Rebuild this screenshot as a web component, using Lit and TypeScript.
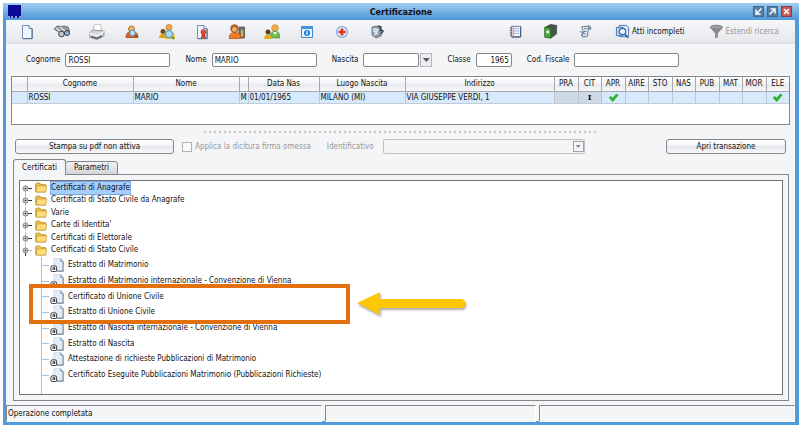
import { LitElement, html, css, svg, nothing } from "lit";
import { customElement } from "lit/decorators.js";
import { classMap } from "lit/directives/class-map.js";

const page = svg`<path d="M3.500 1.500h6.500l3 3v10h-9.500z" fill="#eef4fc" stroke="#7d8fb0"/><path d="M10 1.500v3h3" fill="#fff" stroke="#6b82a8"/><path d="M13.200 5v9.700H4" fill="none" stroke="#56698f"/>`;

const icons = {
  page,
  binoculars: svg`<path d="M0 5l3-3 4 .5 3-.5 4 1 2 5-3 3-5-1z" fill="#9a9ea1" stroke="#5b5f62" stroke-width=".8"/><path d="M2 4l5 4M6 3l5 4" stroke="#e6e8ea" stroke-width="1.200"/><circle cx="7.500" cy="10" r="2.800" fill="#c3c8cc" stroke="#3c4043"/><circle cx="13" cy="9" r="2.500" fill="#8cbbe4" stroke="#3c4043"/>`,
  printer: svg`<path d="M4 7l1-6 6-1 2 6z" fill="#fff" stroke="#a5a9ac" stroke-width=".7"/><path d="M0 9l4-3 11 1v5l-7 3.500L0 13z" fill="#d5d8da" stroke="#85898c" stroke-width=".8"/><path d="M0 9l8 2.500 7-4" fill="none" stroke="#fff"/><path d="M2 12.500l6 2 5-2.500" fill="none" stroke="#5e6366" stroke-width="1.400"/>`,
  userSearch: svg`<path d="M2 13.500c0-5 3-6 6-6s6 1 6 6z" fill="#d9622b" stroke="#9b3c14" stroke-width=".7"/><circle cx="7.500" cy="5" r="3" fill="#efb35b" stroke="#a85c1e" stroke-width=".8"/><circle cx="8.500" cy="9" r="2.800" fill="#b9e2fb" stroke="#4b91c8"/><path d="M11 11.500l2.500 2" stroke="#8a5a20" stroke-width="2"/>`,
  family: svg`<circle cx="10" cy="3.500" r="3" fill="#f0a63c" stroke="#b66a16" stroke-width=".6"/><path d="M6 15c0-6 2-8 5-8s5 2 5 8z" fill="#f2bc35"/><circle cx="4" cy="7.500" r="2.500" fill="#6b4a17"/><path d="M0 14c0-3 2-4.500 4-4.500s4 1.500 4 4.500z" fill="#dca415"/><circle cx="10" cy="10" r="3.500" fill="#a9dafa" stroke="#4b91c8"/><path d="M13 13l2 2" stroke="#48a338" stroke-width="2"/>`,
  pageRibbon: svg`${page}<circle cx="9.500" cy="8" r="2.600" fill="#e2503c" stroke="#b12d20" stroke-width=".6"/><path d="M8 10l-1.500 5 2.500-1.500L12 15l-1-5z" fill="#cf3527"/>`,
  userCard: svg`<path d="M10 3h5.500v11H10z" fill="#6b7378" stroke="#43494d" stroke-width=".7"/><path d="M12 5l2 2v5l-2 1z" fill="#e4b43a"/><path d="M0 14.500c0-5 3-6 6-6s6 1 6 6z" fill="#ee7c20" stroke="#a84b10" stroke-width=".7"/><circle cx="5.500" cy="4.500" r="3.800" fill="#c46a26" stroke="#8a4313" stroke-width=".7"/><circle cx="5.500" cy="5.500" r="2.300" fill="#f2b878"/>`,
  couple: svg`<circle cx="11" cy="4" r="3.300" fill="#f2b04a" stroke="#b2741e" stroke-width=".6"/><path d="M6 14c0-5 2-6.500 5-6.500s5 1.500 5 6.500z" fill="#6dbd4d" stroke="#3c8a28" stroke-width=".6"/><circle cx="4" cy="8" r="2.500" fill="#5e3f14"/><path d="M0 15c0-3 2-4.500 4-4.500s4 1.500 4 4.500z" fill="#e0aa1d"/><path d="M9 8l2 3 2-3" fill="#fff"/>`,
  infoBox: svg`<path d="M2.500 2.500h11v11h-11z" fill="#e9f5fe" stroke="#3a8bd0"/><path d="M2 2h12v3H2z" fill="#3f97df"/><circle cx="8" cy="9" r="3" fill="#1f7dcb"/><path d="M8 7v4" stroke="#fff" stroke-width="1.200"/>`,
  medical: svg`<circle cx="8" cy="8" r="5.500" fill="#dceafa" stroke="#7ea5cc" stroke-width="1.200"/><path d="M8 4.500v7M4.500 8h7" stroke="#e8301f" stroke-width="2.600"/>`,
  globeGear: svg`<path d="M3 3l5-1 5 3-1 7-5 2-4-3z" fill="#8e9cab" stroke="#5d6b79" stroke-width=".8"/><path d="M4 5l5 .5-1 2-3-.2 3 2-3 1.700" fill="none" stroke="#e5eef7" stroke-width="1.300"/><path d="M9 2l3 1-1 3 3 1-2 3" fill="none" stroke="#35424f" stroke-width="1.400"/>`,
  notebook: svg`<path d="M3.500 2.500h10v11h-10z" fill="#f2f7fe" stroke="#5e7299"/><path d="M13.500 3v11H4" fill="none" stroke="#3f5070"/><path d="M6 5h6M6 7.500h6M6 10h6" stroke="#8fb0dc"/><path d="M5.500 3v10" stroke="#df6a5e"/><path d="M2 4.500h2M2 7h2M2 9.500h2M2 12h2" stroke="#555"/>`,
  binder: svg`<path d="M2 3.500l6-3 6.500 1v9l-6 4.500-6.500-1z" fill="#4a5350" stroke="#2f3734" stroke-width=".7"/><path d="M2 3.500l6 1V15l-6-1z" fill="#3fae35" stroke="#26741f" stroke-width=".7"/><path d="M3.500 7h3v3h-3z" fill="#e6f7e3"/>`,
  scroll: svg`<path d="M4 3l8-1 2 3-3 1-1 7-5 1-1-3 2-1z" fill="#dbe5ef" stroke="#66788c"/><path d="M6.500 5h3M6 8h3M6 10.500h2" stroke="#54789c"/><circle cx="12" cy="4" r="1.500" fill="#93a9c0" stroke="#54657a" stroke-width=".6"/><path d="M2 8l3 1-1 4" fill="none" stroke="#66788c"/>`,
  docSearch: svg`<path d="M4.500 1.500h8l2 2v10h-10z" fill="#dbe9fa" stroke="#4b78b8"/><path d="M1.500 3.500h7v9h-7z" fill="#b5d0f2" stroke="#4b78b8"/><circle cx="8" cy="8" r="3.400" fill="#eaf6ff" stroke="#34619f" stroke-width="1.200"/><path d="M10.500 11l3.500 3.500" stroke="#34619f" stroke-width="2"/>`,
  funnel: svg`<path d="M1.500 4l5 6v5.500l3-1.500v-4l5-6z" fill="#8a8b8d"/><ellipse cx="8" cy="3.500" rx="6.500" ry="2.200" fill="#9a9b9d" stroke="#7a7b7d"/>`,
  folder: svg`<path d="M1.500 13V3.500l1-1h4l1.500 2h5.500v9h-11z" fill="#f3c64c" stroke="#b5861c"/><path d="M3 6h12l-1 7.500H2z" fill="#fddc7c" stroke="#c29327" stroke-width=".8"/>`,
  leaf: svg`<path d="M4.500 .5h7.500l3 3.500V14.500H4.500z" fill="#e4edf7"/><path d="M15 4v11H7.500" fill="none" stroke="#6a7c8e" stroke-width="1.200"/><path d="M4.500 8V.5h7.500" fill="none" stroke="#d0d9e2"/><path d="M12 .5v3.500h3z" fill="#8fbbe4" stroke="#6f93b5" stroke-width=".6"/><rect x="1" y="9" width="6.500" height="6.500" rx="1.500" fill="#fff" stroke="#333" stroke-width="1.100"/><path d="M2.800 13.700l2.400-2.400M3 11.200h2.400v2.400" fill="none" stroke="#111" stroke-width="1.100"/>`,
  check: svg`<path d="M1.500 8.500L4 6l2.500 3L12 3l3 1.500L7 14z" fill="#2bb32b" stroke="#1f9a22" stroke-width=".6"/>`,
};
type IconName = keyof typeof icons;

const icon = (name: IconName, cls = "ic") =>
  html`<svg class=${cls} viewBox="0 0 16 16" aria-hidden="true">${icons[name]}</svg>`;

const leftTools: [IconName, string][] = [
  ["page", "Nuovo"], ["binoculars", "Cerca"], ["printer", "Stampa"], ["userSearch", "Cerca persona"],
  ["family", "Famiglia"], ["pageRibbon", "Certificato"], ["userCard", "Scheda"], ["couple", "Coniugi"],
  ["infoBox", "Informazioni"], ["medical", "Sanitario"], ["globeGear", "Servizi"],
];
const rightTools: [IconName, string][] = [["notebook", "Registro"], ["binder", "Archivio"], ["scroll", "Atti"]];

const flags = ["PRA", "CIT", "APR", "AIRE", "STO", "NAS", "PUB", "MAT", "MOR", "ELE"];
const folders = [
  "Certificati di Anagrafe", "Certificati di Stato Civile da Anagrafe", "Varie",
  "Carte di Identita'", "Certificati di Elettorale", "Certificati di Stato Civile",
];
const leaves = [
  "Estratto di Matrimonio", "Estratto di Matrimonio internazionale - Convenzione di Vienna",
  "Certificato di Unione Civile", "Estratto di Unione Civile",
  "Estratto di Nascita internazionale - Convenzione di Vienna", "Estratto di Nascita",
  "Attestazione di richieste Pubblicazioni di Matrimonio",
  "Certificato Eseguite Pubblicazioni Matrimonio (Pubblicazioni Richieste)",
];

@customElement("app-root")
export class AppRoot extends LitElement {
  static styles = css`
    :host { display: block; min-height: 100vh; box-sizing: border-box; padding: 3px 1px 1px 3px; background: #fff;
      font: 8px/12px "DejaVu Sans Condensed", "DejaVu Sans", sans-serif; color: #111; }
    * { box-sizing: border-box; }
    button, input, select { font: inherit; color: inherit; margin: 0; }
    .window { display: flex; flex-direction: column; min-height: calc(100vh - 4px); background: #f4f5f7;
      border: solid #4f9bdc; border-width: 0 4px 4px 3px; }
    .title { display: flex; align-items: center; height: 17px; margin: 0 -4px 0 -3px; padding: 0 7px 0 5px;
      background: linear-gradient(#a3cdf0, #7ab3e4 45%, #4c96d8); }
    .logo { width: 13px; height: 13px; background: #0a0a96; border-bottom: 2px dotted #8f9be0; }
    .title h1 { flex: 1; margin: 0; padding-left: 28px; text-align: center; font: bold 9px/16px "DejaVu Sans Condensed", sans-serif; }
    .wbtns { display: flex; gap: 3px; }
    .wbtn { width: 11px; height: 11px; padding: 0; border: 1px solid #3d6d96; background: #557f9f; display: flex; }
    .wbtn.close { background: #c8554f; border-color: #8e3b42; }
    .wbtn svg { width: 9px; height: 9px; }
    .toolbar { display: flex; align-items: center; height: 24px; background: linear-gradient(#f6f7f9, #e6e7ea); border-bottom: 1px solid #dcdde0; }
    .tool { border: 0; background: none; padding: 0; width: 35px; height: 22px; display: flex; align-items: center; justify-content: center; }
    .ic { width: 14px; height: 14px; }
    .left { display: flex; padding-left: 3px; flex: 1; }
    .left .ic { width: 16px; height: 16px; }
    .right { display: flex; align-items: center; }
    .right .tool .ic { width: 15px; height: 15px; }
    .text { width: auto; gap: 2px; margin-left: 12px; }
    .text.off { color: #96989c; margin: 0 16px 0 24px; }
    .form { display: flex; align-items: center; height: 32px; padding: 0 0 0 20px; }
    .form label { display: flex; align-items: center; gap: 5px; margin-right: 15px; }
    .field { height: 14px; border: 1px solid #85878b; border-radius: 2px; background: #fff; padding: 0 2px; width: 105px; }
    .field.year { width: 36px; text-align: right; }
    .date { display: flex; gap: 1px; }
    .date .field { width: 56px; }
    .drop { width: 12px; height: 14px; border: 1px solid #b4b6ba; background: #eceef1; padding: 0; display: flex; align-items: center; justify-content: center; }
    .arrow { width: 7px; height: 4px; background: #55595d; clip-path: polygon(0 0, 100% 0, 50% 100%); }
    .grid { margin: 0 5px; height: 49px; border: 1px solid #85878b; background: #fff; }
    table { width: 100%; border-collapse: collapse; table-layout: fixed; }
    th { font-weight: normal; height: 14px; padding: 0; background: linear-gradient(#fff, #f1f2f4 50%, #e8eaed 60%, #f7f8fa); border-right: 1px solid #a7a9ad; border-bottom: 1px solid #a7a9ad; white-space: nowrap; }
    td { height: 12px; padding: 0 1px; background: #d7e9fc; border-right: 1px solid #bdc5ce; border-bottom: 1px solid #c5ccd4; line-height: 11px; white-space: nowrap; }
    th:last-child, td:last-child { border-right: 0; }
    td.flag { text-align: center; }
    td.grey { background: #cdd9e6; }
    td b { font-family: "DejaVu Serif", serif; }
    td .ic { display: block; width: 13px; height: 11px; margin: 0 auto; }
    .c0 { width: 15px; } .c1 { width: 106px; } .c2 { width: 106px; } .c3 { width: 9px; } .c4 { width: 71px; } .c5 { width: 86px; } .cf { width: 23px; }
    .cf:nth-child(even) { width: 24px; }
    .split { height: 14px; display: flex; align-items: center; justify-content: center; }
    .dots { width: 394px; height: 2px; background: repeating-linear-gradient(90deg, #c4c6c9 0 2px, transparent 2px 5px); }
    .actions { display: flex; align-items: center; padding: 0 9px; color: #96989c; }
    .btn { height: 15px; padding: 0; color: #111; border: 1px solid #85878b; border-radius: 3px; background: linear-gradient(#fff, #f6f6f8 40%, #e4e5ec 50%, #fafafb); line-height: 12px; }
    .btn.print { width: 159px; }
    .btn.open { width: 120px; margin-left: auto; }
    .sign { display: flex; align-items: center; gap: 3px; margin: 0 16px 0 8px; }
    .sign input { appearance: none; width: 10px; height: 10px; border: 1px solid #b0b2b6; background: #f8f9fa; }
    .ident { display: flex; align-items: center; gap: 9px; }
    .combo { position: relative; display: flex; }
    .combo select { appearance: none; width: 202px; height: 15px; border: 1px solid #a9abaf; border-radius: 2px; background: #f4f5f7; padding: 0; }
    .combo .knob { position: absolute; right: 1px; top: 2px; width: 11px; height: 11px; border: 1px solid #a0a2a6; display: flex; align-items: center; justify-content: center; pointer-events: none; }
    .knob .arrow { width: 5px; height: 3px; background: #85878b; }
    .tabs { display: flex; align-items: flex-end; margin: 5px 0 -1px 7px; height: 16px; position: relative; }
    .tab { border: 1px solid #85878b; border-radius: 3px 3px 0 0; padding: 0; height: 13px; width: 53px; line-height: 12px; background: linear-gradient(#f3f3f5, #d4d5d9); }
    .tab.on { width: 53px; height: 16px; border-bottom: 0; background: #f4f5f7; }
    .tab + .tab { margin-left: -1px; height: 14px; }
    .panel { flex: 1; display: flex; margin: 0 6px 0 7px; padding: 5px; border: 1px solid #85878b; }
    .tree { position: relative; flex: 1; display: flex; flex-direction: column; border: 1px solid #6f7175; background: #fff; padding: 0 0 0 2px; }
    ul { list-style: none; margin: 0; padding: 0; }
    .branch { display: flex; align-items: center; height: 13px; }
    .branch + .branch { margin-top: -1px; }
    .tree .branch:nth-child(even) { height: 14px; }
    .handle { width: 10px; height: 12px; flex: none; }
    .folder { width: 14px; height: 13px; margin: 0 3px 0 2px; }
    .name.sel { background: #a6cdfb; outline: 1px solid #74a9e4; }
    .leaves { flex: 1; margin-left: 19px; border-left: 1px solid #9cc4e6; }
    .leaf { display: flex; align-items: center; height: 16px; }
    .leaf:nth-child(3n) { height: 15px; }
    .leaf::before { content: ""; width: 7px; height: 1px; background: #9cc4e6; }
    .leaf .ic { width: 14px; height: 14px; margin: 0 4px 0 1px; }
    .mark { position: absolute; left: 9px; top: 103px; width: 321px; height: 40px; border: 4px solid #e36f0d; }
    .pointer { position: absolute; left: 335px; top: 107px; width: 116px; height: 32px; filter: drop-shadow(1px 2px 1px #0005); }
    .status { display: grid; grid-template-columns: 317fr 211fr 257fr; gap: 3px; margin-top: 4px; height: 16px; }
    .status div { border: 1px solid; border-color: #85878b #fff #fff #85878b; padding: 1px; line-height: 13px; }
  `;

  private tool([name, label]: [IconName, string]) {
    return html`<button class="tool" aria-label=${label}>${icon(name)}</button>`;
  }

  render() {
    return html`
      <main class="window">
        <header class="title">
          <span class="logo"></span>
          <h1>Certificazione</h1>
          <div class="wbtns">
            <button class="wbtn" aria-label="Riduci"><svg viewBox="0 0 9 9"><path d="M7.500 1.500L3 6M2 2.500V7h4.500" fill="none" stroke="#fff" stroke-width="1.500"/></svg></button>
            <button class="wbtn" aria-label="Ingrandisci"><svg viewBox="0 0 9 9"><path d="M1.500 7.500L6 3M2.500 2H7v4.500" fill="none" stroke="#fff" stroke-width="1.500"/></svg></button>
            <button class="wbtn close" aria-label="Chiudi"><svg viewBox="0 0 9 9"><path d="M2 2l5 5M7 2L2 7" stroke="#fff" stroke-width="1.600"/></svg></button>
          </div>
        </header>
        <nav class="toolbar">
          <div class="left">${leftTools.map((t) => this.tool(t))}</div>
          <div class="right">
            ${rightTools.map((t) => this.tool(t))}
            <button class="tool text">${icon("docSearch")}Atti incompleti</button>
            <button class="tool text off" disabled>${icon("funnel")}Estendi ricerca</button>
          </div>
        </nav>
        <form class="form">
          <label>Cognome <input class="field" value="ROSSI" /></label>
          <label>Nome <input class="field" value="MARIO" /></label>
          <label>Nascita <span class="date"><input class="field" /><button type="button" class="drop" aria-label="Scegli data"><span class="arrow"></span></button></span></label>
          <label>Classe <input class="field year" value="1965" /></label>
          <label>Cod. Fiscale <input class="field" /></label>
        </form>
        <div class="grid">
          <table>
            <colgroup><col class="c0" /><col class="c1" /><col class="c2" /><col class="c3" /><col class="c4" /><col class="c5" /><col />${flags.map(() => html`<col class="cf" />`)}</colgroup>
            <thead><tr><th></th><th>Cognome</th><th>Nome</th><th></th><th>Data Nas</th><th>Luogo Nascita</th><th>Indirizzo</th>${flags.map((f) => html`<th>${f}</th>`)}</tr></thead>
            <tbody><tr>
              <td></td><td>ROSSI</td><td>MARIO</td><td>M</td><td>01/01/1965</td><td>MILANO (MI)</td><td>VIA GIUSEPPE VERDI, 1</td>
              ${flags.map((f, i) => html`<td class=${classMap({ flag: true, grey: i < 2 })}>${f === "CIT" ? html`<b>I</b>` : f === "APR" || f === "ELE" ? icon("check") : nothing}</td>`)}
            </tr></tbody>
          </table>
        </div>
        <div class="split"><div class="dots"></div></div>
        <section class="actions">
          <button class="btn print">Stampa su pdf non attiva</button>
          <label class="sign"><input type="checkbox" disabled />Applica la dicitura firma omessa</label>
          <label class="ident">Identificativo <span class="combo"><select disabled></select><span class="knob"><span class="arrow"></span></span></span></label>
          <button class="btn open">Apri transazione</button>
        </section>
        <div class="tabs" role="tablist">
          <button class="tab on" role="tab" aria-selected="true">Certificati</button>
          <button class="tab" role="tab" aria-selected="false">Parametri</button>
        </div>
        <section class="panel">
          <div class="tree">
            <ul>
              ${folders.map((name, i) => html`<li class="branch">
                <svg class="handle" viewBox="0 0 10 12" aria-hidden="true">
                  <path d=${i === 0 ? "M3.500 6v6" : i === 5 ? "M3.500 0v6M6 6.500h4" : "M3.500 0v12"} stroke="#9cc4e6"/>
                  <path d=${i === 5 ? "M3.500 6v6" : "M4 6.500h6"} stroke="#333"/>
                  <circle cx="3.500" cy="6.500" r="2.500" fill="#e8eaec" stroke="#777"/><circle cx="3.500" cy="6.500" r="1" fill="#333"/>
                </svg>${icon("folder", "folder")}<span class=${classMap({ name: true, sel: i === 0 })}>${name}</span></li>`)}
            </ul>
            <ul class="leaves">${leaves.map((name) => html`<li class="leaf">${icon("leaf")}<span>${name}</span></li>`)}</ul>
            <div class="mark"></div>
            <svg class="pointer" viewBox="0 0 116 32" aria-hidden="true"><path d="M2 15L25 4v7h81a4 4 0 0 1 0 9H25v7z" fill="#fdc708"/></svg>
          </div>
        </section>
        <footer class="status"><div>Operazione completata</div><div></div><div></div></footer>
      </main>
    `;
  }
}
